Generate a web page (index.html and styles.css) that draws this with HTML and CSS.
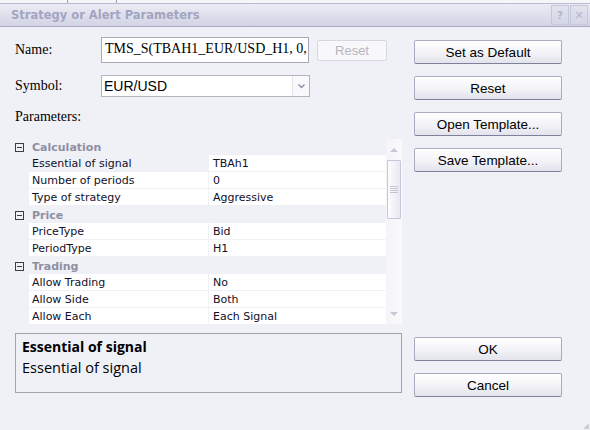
FILE: index.html
```html
<!DOCTYPE html>
<html lang="en">
<head>
    <meta charset="UTF-8">
    <title>Strategy or Alert Parameters</title>
    <link rel="stylesheet" href="styles.css">
</head>
<body>
    <div class="window">
        <!-- edge of the window behind -->
        <div class="backdrop"><span></span><span></span></div>

        <div class="titlebar">
            <span class="title">Strategy or Alert Parameters</span>
            <div class="caption-buttons">
                <span class="cap-btn">?</span>
                <span class="cap-btn">&#x2715;</span>
            </div>
        </div>

        <div class="content">
            <div class="left">
                <div class="field-row name-row">
                    <label class="field-label">Name:</label>
                    <div class="textbox">TMS_S(TBAH1_EUR/USD_H1, 0,</div>
                    <button class="btn btn-small" disabled>Reset</button>
                </div>
                <div class="field-row symbol-row">
                    <label class="field-label">Symbol:</label>
                    <div class="combo">
                        <span class="combo-text">EUR/USD</span>
                        <span class="combo-arrow">
                            <svg width="7" height="5" viewBox="0 0 7 5"><path d="M0.5 0.5 L3.5 3.5 L6.5 0.5" fill="none" stroke="#8a8ca0" stroke-width="1.4"/></svg>
                        </span>
                    </div>
                </div>
                <div class="section-label">Parameters:</div>

                <div class="propgrid">
                    <div class="rows">
                        <div class="category"><span class="toggle"></span>Calculation</div>
                        <div class="prop selected"><span class="name">Essential of signal</span><span class="value">TBAh1</span></div>
                        <div class="prop"><span class="name">Number of periods</span><span class="value">0</span></div>
                        <div class="prop"><span class="name">Type of strategy</span><span class="value">Aggressive</span></div>
                        <div class="category"><span class="toggle"></span>Price</div>
                        <div class="prop"><span class="name">PriceType</span><span class="value">Bid</span></div>
                        <div class="prop"><span class="name">PeriodType</span><span class="value">H1</span></div>
                        <div class="category"><span class="toggle"></span>Trading</div>
                        <div class="prop"><span class="name">Allow Trading</span><span class="value">No</span></div>
                        <div class="prop"><span class="name">Allow Side</span><span class="value">Both</span></div>
                        <div class="prop"><span class="name">Allow Each</span><span class="value">Each Signal</span></div>
                    </div>
                    <div class="scrollbar">
                        <span class="arrow up"></span>
                        <div class="thumb"><span class="grip"></span></div>
                        <span class="arrow down"></span>
                    </div>
                </div>

                <div class="description">
                    <div class="desc-title">Essential of signal</div>
                    <div class="desc-text">Essential of signal</div>
                </div>
            </div>

            <div class="right">
                <div class="btn-group">
                    <button class="btn">Set as Default</button>
                    <button class="btn">Reset</button>
                    <button class="btn">Open Template...</button>
                    <button class="btn">Save Template...</button>
                </div>
                <div class="btn-group bottom-group">
                    <button class="btn">OK</button>
                    <button class="btn">Cancel</button>
                </div>
            </div>
        </div>
        <span class="resize-grip"></span>
    </div>
</body>
</html>
```

FILE: styles.css
```css
body {
    margin: 0;
    background-color: #f0f0f7;
    font-family: "Liberation Sans", Arial, sans-serif;
}
.window {
    position: relative;
    width: 590px;
    height: 430px;
    overflow: hidden;
    background-color: #f0f0f7;
}
.backdrop {
    height: 3px;
    background-color: #f6f6f9;
    display: flex;
}
.backdrop span {
    width: 48px;
    border-right: 1px solid #9c9cb0;
}
.backdrop span:first-child {
    width: 67px;
}
.titlebar {
    height: 22px;
    display: flex;
    align-items: center;
    justify-content: space-between;
    padding: 0 2px 0 11px;
    border-top: 1px solid #b9bbd0;
    border-bottom: 1px solid #a6a8c4;
    background: linear-gradient(#ececf4, #d2d3e4);
}
.title {
    font-family: "DejaVu Sans", Verdana, sans-serif;
    font-weight: bold;
    font-size: 11.5px;
    color: #a2a5c2;
}
.caption-buttons {
    display: flex;
    gap: 1px;
}
.cap-btn {
    width: 16px;
    height: 18px;
    border: 1px solid #c4c6da;
    display: flex;
    align-items: center;
    justify-content: center;
    font-family: "DejaVu Sans", sans-serif;
    font-weight: bold;
    font-size: 11px;
    color: #b4b6ca;
    background: linear-gradient(#e2e3ee, #d4d5e6);
}
.content {
    display: flex;
    padding: 10px 0 0 13px;
}
.left {
    width: 389px;
}
.field-row {
    display: flex;
    align-items: center;
}
.field-label {
    width: 86px;
    padding-left: 2px;
    font-family: "Liberation Serif", "Times New Roman", serif;
    font-size: 14px;
    color: #000;
}
.name-row {
    height: 26px;
}
.textbox {
    box-sizing: border-box;
    width: 208px;
    height: 26px;
    padding: 3px 1px 0 3px;
    border: 1px solid #a9a9b4;
    background-color: #fff;
    font-family: "Liberation Serif", "Times New Roman", serif;
    font-size: 14px;
    white-space: nowrap;
    overflow: hidden;
}
.btn {
    box-sizing: border-box;
    height: 24px;
    padding: 0;
    border: 1px solid #a9abbe;
    border-bottom-color: #7f819c;
    border-radius: 2px;
    background: linear-gradient(#ffffff, #f3f3f7 55%, #e2e3ec);
    font-family: "Liberation Sans", Arial, sans-serif;
    font-size: 13.5px;
    color: #000;
}
.btn-small {
    width: 70px;
    height: 21px;
    margin-left: 8px;
    border-color: #d6d7e0;
    background: #f8f8fb;
    color: #b4b5c0;
    font-size: 13px;
}
.symbol-row {
    height: 22px;
    margin-top: 12px;
}
.combo {
    box-sizing: border-box;
    width: 209px;
    height: 22px;
    display: flex;
    border: 1px solid #b4b5c2;
    background-color: #fff;
}
.combo-text {
    flex: 1;
    padding-left: 2px;
    line-height: 20px;
    font-size: 14px;
}
.combo-arrow {
    width: 16px;
    display: flex;
    align-items: center;
    justify-content: center;
    border-left: 1px solid #e2e2ea;
    background-color: #f9f9fc;
}
.section-label {
    margin-top: 10px;
    padding-left: 2px;
    line-height: 20px;
    font-family: "Liberation Serif", "Times New Roman", serif;
    font-size: 14px;
}
.propgrid {
    display: flex;
    height: 187px;
    margin-top: 11px;
    font-family: "DejaVu Sans", Tahoma, sans-serif;
    font-size: 11px;
    color: #10102a;
}
.rows {
    width: 373px;
}
.category {
    box-sizing: border-box;
    height: 17px;
    padding-top: 1px;
    display: flex;
    align-items: center;
    font-weight: bold;
    color: #8e8fa2;
}
.toggle {
    position: relative;
    box-sizing: border-box;
    width: 9px;
    height: 9px;
    margin: 0 8px 0 2px;
    border: 1px solid #3c3c48;
}
.toggle::after {
    content: "";
    position: absolute;
    left: 1px;
    top: 3px;
    width: 5px;
    height: 1px;
    background-color: #3c3c48;
}
.prop {
    height: 17px;
    display: flex;
    padding-left: 16px;
}
.prop span {
    box-sizing: border-box;
    height: 16px;
    padding-top: 1px;
    line-height: 16px;
    background-color: #fff;
    white-space: nowrap;
}
.prop .name {
    width: 180px;
    padding-left: 3px;
    border-right: 1px solid #f0f0f7;
}
.prop .value {
    width: 177px;
    padding-left: 4px;
}
.prop.selected .name {
    background-color: #f0f0f7;
}
.scrollbar {
    position: relative;
    width: 16px;
    height: 185px;
    margin-top: 1px;
    background: linear-gradient(90deg, #f4f4f9, #fafafc);
}
.arrow {
    position: absolute;
    left: 4px;
    width: 0;
    height: 0;
    border-left: 4px solid transparent;
    border-right: 4px solid transparent;
}
.arrow.up {
    top: 9px;
    border-bottom: 4px solid #c6c7d6;
}
.arrow.down {
    bottom: 8px;
    border-top: 4px solid #c6c7d6;
}
.thumb {
    position: absolute;
    left: 1px;
    top: 21px;
    box-sizing: border-box;
    width: 14px;
    height: 59px;
    border: 1px solid #c6c7d8;
    border-radius: 1px;
    background: linear-gradient(90deg, #fdfdff, #e8e8f1);
}
.grip {
    position: absolute;
    left: 2px;
    top: 25px;
    width: 8px;
    height: 7px;
    background: repeating-linear-gradient(#c4c5d6 0 1px, transparent 1px 2px);
}
.description {
    box-sizing: border-box;
    width: 387px;
    height: 60px;
    margin: 8px 0 0 2px;
    padding: 2px 6px;
    border: 1px solid #a3a3a8;
    font-family: "Open Sans", "Noto Sans", sans-serif;
    font-size: 14.5px;
    line-height: 21px;
    color: #000;
}
.desc-title {
    font-weight: bold;
    font-size: 14px;
}
.right {
    width: 148px;
    margin-left: 12px;
    padding-top: 3px;
}
.btn-group {
    display: flex;
    flex-direction: column;
    gap: 12px;
}
.btn-group .btn {
    width: 148px;
}
.bottom-group {
    margin-top: 165px;
}
.resize-grip {
    position: absolute;
    right: 1px;
    bottom: 1px;
    width: 6px;
    height: 6px;
    background: radial-gradient(circle, #b8b9c8 0.6px, transparent 0.9px) 0 0 / 2px 2px;
    clip-path: polygon(100% 0, 100% 100%, 0 100%);
}
```
